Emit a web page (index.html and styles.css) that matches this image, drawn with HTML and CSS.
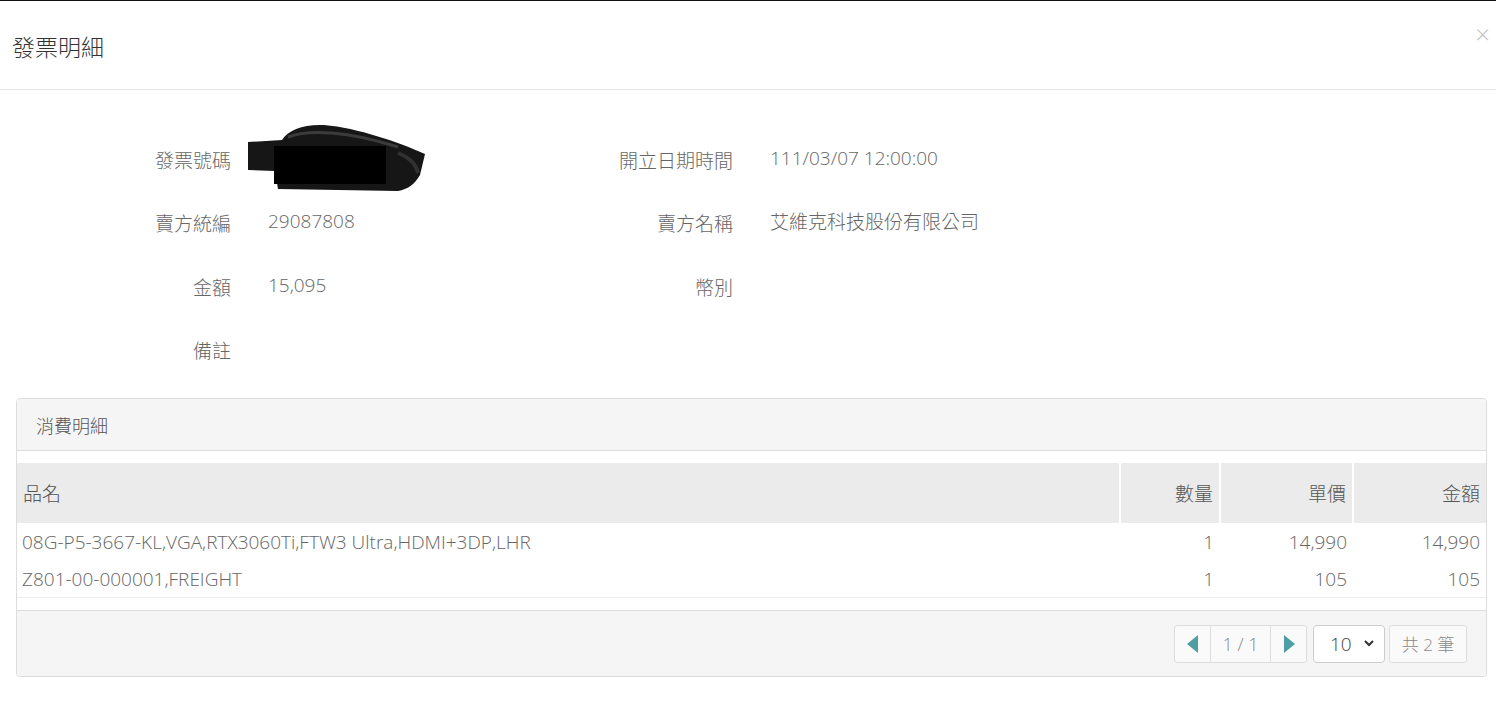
FILE: index.html
```html
<!DOCTYPE html>
<html lang="zh-Hant">
<head>
    <meta charset="UTF-8">
    <title>發票明細</title>
    <link rel="stylesheet" href="styles.css">
</head>
<body>
    <div class="modal">
        <!-- Header -->
        <div class="modal-header">
            <h4 class="modal-title">發票明細</h4>
            <span class="close">&times;</span>
        </div>

        <!-- Invoice info -->
        <div class="modal-body">
            <div class="info-grid">
                <div class="field">
                    <span class="label">發票號碼</span>
                    <span class="value">
                        <svg class="redact" width="178" height="70" viewBox="0 0 178 70">
                            <path d="M0,19 L34,17 C40,7 56,1 76,2 C110,5 150,19 177,31 L172,52 C166,62 160,66 150,68 L30,66 L27,48 L0,47 Z" fill="#161616"/>
                            <path d="M40,14 C60,6 100,8 150,24" stroke="#555" stroke-width="3" fill="none" opacity="0.6"/>
                            <path d="M150,30 C160,34 168,40 170,50" stroke="#444" stroke-width="4" fill="none" opacity="0.6"/>
                            <rect x="26" y="23" width="112" height="38" fill="#000"/>
                        </svg>
                    </span>
                </div>
                <div class="field">
                    <span class="label">開立日期時間</span>
                    <span class="value">111/03/07 12:00:00</span>
                </div>
                <div class="field">
                    <span class="label">賣方統編</span>
                    <span class="value">29087808</span>
                </div>
                <div class="field">
                    <span class="label">賣方名稱</span>
                    <span class="value">艾維克科技股份有限公司</span>
                </div>
                <div class="field">
                    <span class="label">金額</span>
                    <span class="value">15,095</span>
                </div>
                <div class="field">
                    <span class="label">幣別</span>
                    <span class="value"></span>
                </div>
                <div class="field">
                    <span class="label">備註</span>
                    <span class="value"></span>
                </div>
            </div>

            <!-- Items panel -->
            <div class="panel">
                <div class="panel-heading">消費明細</div>
                <div class="panel-body">
                    <table class="items">
                        <thead>
                            <tr>
                                <th class="col-name">品名</th>
                                <th class="col-qty num">數量</th>
                                <th class="col-price num">單價</th>
                                <th class="col-amount num">金額</th>
                            </tr>
                        </thead>
                        <tbody>
                            <tr>
                                <td>08G-P5-3667-KL,VGA,RTX3060Ti,FTW3 Ultra,HDMI+3DP,LHR</td>
                                <td class="num">1</td>
                                <td class="num">14,990</td>
                                <td class="num">14,990</td>
                            </tr>
                            <tr>
                                <td>Z801-00-000001,FREIGHT</td>
                                <td class="num">1</td>
                                <td class="num">105</td>
                                <td class="num">105</td>
                            </tr>
                        </tbody>
                    </table>
                </div>
                <div class="panel-footer">
                    <div class="pager">
                        <span class="pager-btn">
                            <svg width="12" height="18" viewBox="0 0 12 18"><path d="M11,0 L11,18 L0,9 Z" fill="#4e9ea5"/></svg>
                        </span>
                        <span class="pager-page">1 / 1</span>
                        <span class="pager-btn">
                            <svg width="12" height="18" viewBox="0 0 12 18"><path d="M1,0 L1,18 L12,9 Z" fill="#4e9ea5"/></svg>
                        </span>
                    </div>
                    <div class="page-size">
                        <span>10</span>
                        <svg width="10" height="7" viewBox="0 0 10 7"><path d="M1,1 L5,5 L9,1" stroke="#333" stroke-width="2" fill="none"/></svg>
                    </div>
                    <div class="total">共 2 筆</div>
                </div>
            </div>
        </div>
    </div>
</body>
</html>
```

FILE: styles.css
```css
body {
    margin: 0;
    border-top: 1px solid #111;
    font-family: "Segoe UI", "Open Sans", "Noto Sans CJK TC", sans-serif;
    font-weight: 300;
    color: #666;
    background: #fff;
}
.modal {
    width: 100%;
}
.modal-header {
    display: flex;
    align-items: center;
    justify-content: space-between;
    height: 88px;
    padding: 0 6px 0 12px;
    border-bottom: 1px solid #e5e5e5;
}
.modal-title {
    margin: 0;
    font-size: 23px;
    font-weight: 300;
    color: #333;
    margin-top: 2px;
}
.close {
    font-size: 26px;
    color: #c4c4c4;
    margin-top: -22px;
    line-height: 1;
}
.modal-body {
    padding: 38px 9px 0 16px;
}
.info-grid {
    display: grid;
    grid-template-columns: 502px 502px;
    grid-auto-rows: 63.5px;
    margin: 0 0 16px -16px;
}
.field {
    display: flex;
    align-items: center;
    gap: 37px;
    font-size: 19px;
}
.label {
    width: 231px;
    flex: none;
    text-align: right;
    color: #666;
}
.value {
    color: #666;
    margin-top: -4px;
}
.redact {
    display: block;
    margin: -10px 0 -10px -20px;
}
.panel {
    border: 1px solid #ddd;
    border-radius: 4px;
    box-shadow: 0 1px 1px rgba(0, 0, 0, 0.05);
    overflow: hidden;
}
.panel-heading {
    height: 51px;
    display: flex;
    align-items: center;
    padding: 0 19px;
    background: #f5f5f5;
    border-bottom: 1px solid #ddd;
    font-size: 18px;
    color: #555;
}
.panel-body {
    padding: 12px 0;
}
.items {
    width: 100%;
    border-collapse: collapse;
    font-size: 19px;
}
.items th {
    height: 60px;
    background: #ebebeb;
    font-weight: 300;
    color: #555;
    text-align: left;
    padding: 0 6px;
    border-left: 2px solid #fff;
}
.items th:first-child {
    border-left: none;
    padding-left: 6px;
}
.items td {
    height: 36px;
    padding: 0 6px 0 5px;
    color: #666;
}
.items tbody tr:first-child td {
    height: 38px;
}
.items tbody tr:last-child td {
    border-bottom: 1px solid #eee;
}
.items .num {
    text-align: right;
}
.col-qty {
    width: 86px;
}
.col-price {
    width: 119px;
}
.col-amount {
    width: 120px;
}
.panel-footer {
    height: 65px;
    display: flex;
    align-items: center;
    justify-content: flex-end;
    gap: 6px;
    padding: 0 19px;
    background: #f5f5f5;
    border-top: 1px solid #ddd;
}
.pager {
    display: flex;
    height: 38px;
    border: 1px solid #ddd;
    border-radius: 3px;
    background: #fafafa;
    box-sizing: border-box;
}
.pager-btn {
    width: 35px;
    display: flex;
    align-items: center;
    justify-content: center;
}
.pager-page {
    width: 59px;
    display: flex;
    align-items: center;
    justify-content: center;
    border-left: 1px solid #ddd;
    border-right: 1px solid #ddd;
    font-size: 18px;
    color: #888;
}
.page-size {
    width: 72px;
    height: 38px;
    box-sizing: border-box;
    display: flex;
    align-items: center;
    justify-content: space-between;
    padding: 0 10px 0 16px;
    border: 1px solid #ccc;
    border-radius: 4px;
    background: #fff;
    font-size: 19px;
    color: #444;
}
.total {
    width: 78px;
    height: 38px;
    box-sizing: border-box;
    display: flex;
    align-items: center;
    justify-content: center;
    border: 1px solid #ddd;
    border-radius: 3px;
    background: #fafafa;
    font-size: 17px;
    color: #888;
    margin-left: -2px;
}
```
